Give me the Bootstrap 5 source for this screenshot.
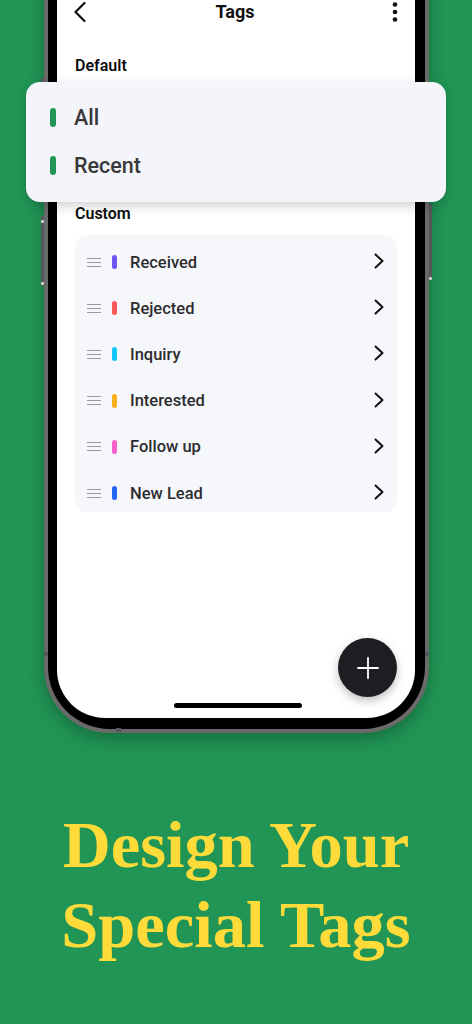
<!DOCTYPE html>
<html lang="en">
<head>
<meta charset="utf-8">
<title>Tags</title>
<link rel="stylesheet" href="https://cdn.jsdelivr.net/npm/bootstrap@5.3.0/dist/css/bootstrap.min.css">
<style>
html,body{margin:0;height:1024px;overflow:hidden;background:#219555;}
.stage{position:relative;width:472px;height:1024px;overflow:hidden;background:#219555;font-family:Roboto,"Liberation Sans",sans-serif;}
.phone-frame{position:relative;width:385px;height:793px;margin:-60px 0 0 44px;border:4px solid #6a6a6a;border-top:0;border-radius:0 0 66px 66px;background:#000;box-shadow:0 6px 16px rgba(0,40,20,.35);}
.phone-screen{position:relative;height:778px;margin:0 10px 0 9px;background:#fff;border-radius:0 0 48px 48px;overflow:hidden;}
.app-head{position:relative;height:23px;margin-top:60px;padding:0 17px 0 17px;}
.app-title{font-size:18px;font-weight:700;color:#111;line-height:23px;margin-left:-8px;}
.sec-label{font-size:16px;font-weight:600;color:#0d0d0d;line-height:20px;padding-left:18px;}
.sec-default{margin-top:33px;}
.sec-custom{margin-top:128px;}
.tag-box{margin:11px 18px 0;background:#f6f7fb;border-radius:12px;padding:4px 0;height:277px;}
.tag-row{height:46.2px;padding:0 13px 0 12px;}
.grip{width:14px;height:9px;border-top:1px solid #9a9a9e;border-bottom:1px solid #9a9a9e;position:relative;margin-right:11px;}
.grip::after{content:"";position:absolute;left:0;right:0;top:3px;height:1px;background:#9a9a9e;}
.tag-dot{width:5px;height:14px;border-radius:3px;margin-right:13px;}
.tag-name{font-size:16.5px;font-weight:500;color:#2c2c2e;line-height:20px;padding-top:1px;}
.row-arrow{margin-bottom:2px;}
.fab-add{position:absolute;right:18px;bottom:21px;width:59px;height:59px;border-radius:50%;background:#1e1e22;box-shadow:0 4px 10px rgba(0,0,0,.25);}
.home-bar{position:absolute;left:117px;bottom:10px;width:128px;height:5px;border-radius:3px;background:#000;}
.float-card{position:absolute;left:26px;top:82px;width:420px;height:120px;background:#f4f5fa;border-radius:14px;padding:11px 0 0 24px;box-shadow:0 4px 12px rgba(0,0,0,.18);}
.float-row{height:48.5px;}
.float-dot{width:6px;height:19px;border-radius:3px;background:#219555;margin-right:18px;}
.float-name{font-size:21.500px;font-weight:500;color:#38383a;line-height:28px;padding-top:1px;}
.headline{position:absolute;left:0;right:0;top:805px;margin:0;text-align:center;font-family:"Liberation Serif",serif;font-weight:700;font-size:66.500px;line-height:80px;color:#fedb38;}
.side-tick{position:absolute;background:#55585a;}
.side-pin{position:absolute;width:3px;height:3px;background:#cfcfcf;border-radius:1px;}
</style>
</head>
<body>
<div class="stage">
  <div class="phone-frame">
    <div class="phone-screen d-flex flex-column">
      <div class="app-head d-flex align-items-center justify-content-between">
        <svg width="12" height="20" viewBox="0 0 12 20" fill="none" stroke="#111" stroke-width="2.200" stroke-linecap="round" stroke-linejoin="round"><path d="M10.500 1 1.500 10l9 9"/></svg>
        <span class="app-title">Tags</span>
        <svg width="6" height="20" viewBox="0 0 6 20" fill="#111"><circle cx="3" cy="2.500" r="2.300"/><circle cx="3" cy="10" r="2.300"/><circle cx="3" cy="17.500" r="2.300"/></svg>
      </div>
      <div class="sec-label sec-default">Default</div>
      <div class="sec-label sec-custom">Custom</div>
      <div class="tag-box">
        <div class="tag-row d-flex align-items-center">
          <span class="grip"></span><span class="tag-dot" style="background:#7152f5"></span><span class="tag-name flex-grow-1">Received</span>
          <svg class="row-arrow" width="10" height="16" viewBox="0 0 10 16" fill="none" stroke="#111" stroke-width="2" stroke-linecap="round" stroke-linejoin="round"><path d="M1.500 1.500 8.500 8l-7 6.500"/></svg>
        </div>
        <div class="tag-row d-flex align-items-center">
          <span class="grip"></span><span class="tag-dot" style="background:#fb5a58"></span><span class="tag-name flex-grow-1">Rejected</span>
          <svg class="row-arrow" width="10" height="16" viewBox="0 0 10 16" fill="none" stroke="#111" stroke-width="2" stroke-linecap="round" stroke-linejoin="round"><path d="M1.500 1.500 8.500 8l-7 6.500"/></svg>
        </div>
        <div class="tag-row d-flex align-items-center">
          <span class="grip"></span><span class="tag-dot" style="background:#12c8fb"></span><span class="tag-name flex-grow-1">Inquiry</span>
          <svg class="row-arrow" width="10" height="16" viewBox="0 0 10 16" fill="none" stroke="#111" stroke-width="2" stroke-linecap="round" stroke-linejoin="round"><path d="M1.500 1.500 8.500 8l-7 6.500"/></svg>
        </div>
        <div class="tag-row d-flex align-items-center">
          <span class="grip"></span><span class="tag-dot" style="background:#fbb01c"></span><span class="tag-name flex-grow-1">Interested</span>
          <svg class="row-arrow" width="10" height="16" viewBox="0 0 10 16" fill="none" stroke="#111" stroke-width="2" stroke-linecap="round" stroke-linejoin="round"><path d="M1.500 1.500 8.500 8l-7 6.500"/></svg>
        </div>
        <div class="tag-row d-flex align-items-center">
          <span class="grip"></span><span class="tag-dot" style="background:#fb5fc9"></span><span class="tag-name flex-grow-1">Follow up</span>
          <svg class="row-arrow" width="10" height="16" viewBox="0 0 10 16" fill="none" stroke="#111" stroke-width="2" stroke-linecap="round" stroke-linejoin="round"><path d="M1.500 1.500 8.500 8l-7 6.500"/></svg>
        </div>
        <div class="tag-row d-flex align-items-center">
          <span class="grip"></span><span class="tag-dot" style="background:#2464f6"></span><span class="tag-name flex-grow-1">New Lead</span>
          <svg class="row-arrow" width="10" height="16" viewBox="0 0 10 16" fill="none" stroke="#111" stroke-width="2" stroke-linecap="round" stroke-linejoin="round"><path d="M1.500 1.500 8.500 8l-7 6.500"/></svg>
        </div>
      </div>
      <div class="fab-add d-flex align-items-center justify-content-center">
        <svg width="22" height="22" viewBox="0 0 22 22" fill="none" stroke="#fff" stroke-width="1.800" stroke-linecap="round"><path d="M11 1v20M1 11h20"/></svg>
      </div>
      <div class="home-bar"></div>
    </div>
  </div>

  <span class="side-tick" style="left:41px;top:78px;width:3px;height:6px"></span>
  <span class="side-tick" style="left:41px;top:216px;width:3px;height:70px"></span>
  <span class="side-pin" style="left:41px;top:220px"></span>
  <span class="side-pin" style="left:41px;top:282px"></span>
  <span class="side-tick" style="left:429px;top:204px;width:3px;height:76px"></span>
  <span class="side-pin" style="left:429px;top:277px"></span>
  <span class="side-tick" style="left:44px;top:652px;width:4px;height:4px"></span>
  <span class="side-tick" style="left:425px;top:652px;width:4px;height:4px"></span>
  <span class="side-tick" style="left:116px;top:728px;width:5px;height:4px"></span>

  <div class="float-card">
    <div class="float-row d-flex align-items-center"><span class="float-dot"></span><span class="float-name">All</span></div>
    <div class="float-row d-flex align-items-center"><span class="float-dot"></span><span class="float-name">Recent</span></div>
  </div>

  <h1 class="headline">Design Your<br>Special Tags</h1>
</div>
<script src="https://cdn.jsdelivr.net/npm/bootstrap@5.3.0/dist/js/bootstrap.bundle.min.js"></script>
</body>
</html>
